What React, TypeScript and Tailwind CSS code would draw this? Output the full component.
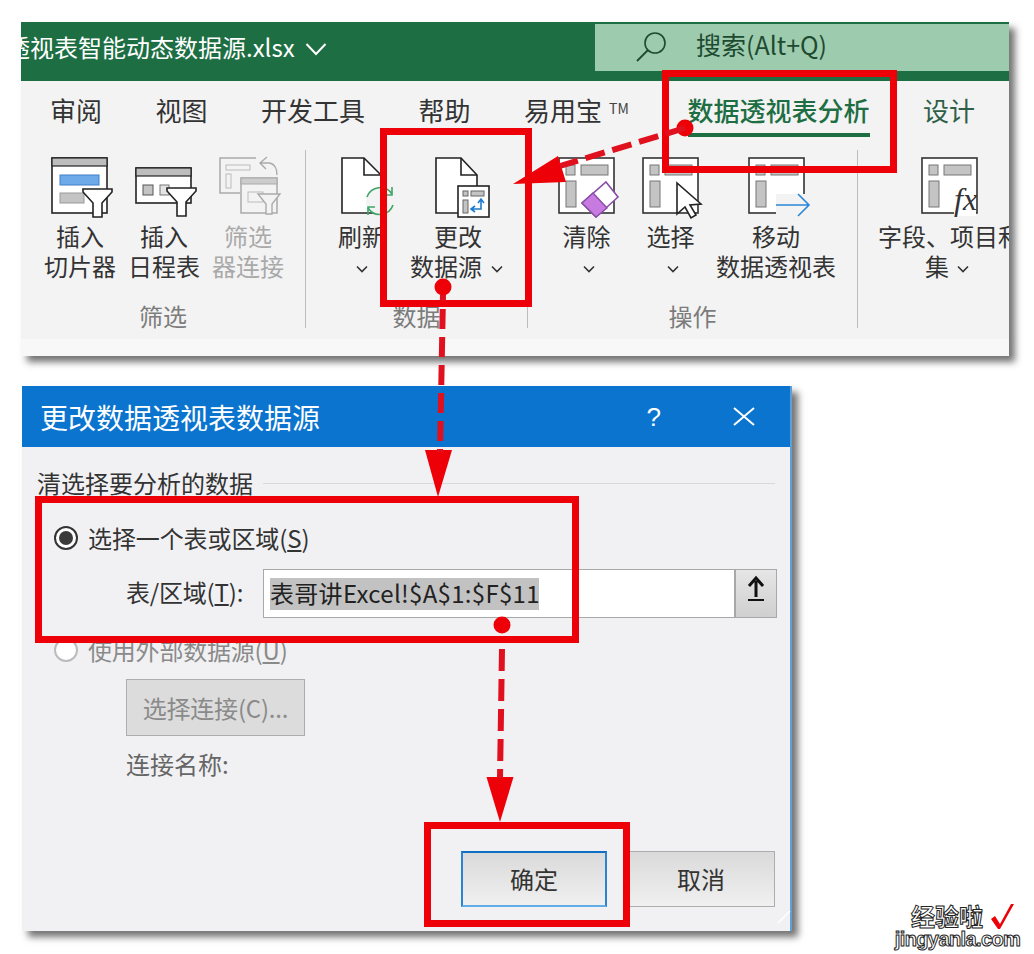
import React from 'react';

const FONT = '"Noto Sans CJK SC","Noto Sans",sans-serif';

function Chevron({ className = '' }: { className?: string }) {
  return (
    <svg width="12" height="8" viewBox="0 0 12 8" className={`inline-block ${className}`}>
      <path d="M1 1.5 L6 6.5 L11 1.5" fill="none" stroke="#333" strokeWidth="1.6" />
    </svg>
  );
}

function Funnel({ x, y, stroke = '#222' }: { x: number; y: number; stroke?: string }) {
  return (
    <path
      d={`M${x} ${y} H${x + 29} V${y + 3} L${x + 19} ${y + 14} V${y + 28} H${x + 10} V${y + 14} L${x} ${y + 3} Z`}
      fill="#fff"
      stroke={stroke}
      strokeWidth="1.6"
    />
  );
}

function Canvas({ children }: { children: React.ReactNode }) {
  return (
    <svg width="80" height="66" viewBox="0 0 80 66" className="mx-auto block">
      {children}
    </svg>
  );
}

function Cells({ x }: { x: number }) {
  return (
    <>
      <rect x={x} y="4" width="55" height="55" fill="#fff" stroke="#333" strokeWidth="1.6" />
      <rect x={x + 7} y="11" width="9" height="10" fill="#c4c4c4" stroke="#777" />
      <rect x={x + 22} y="11" width="27" height="10" fill="#c4c4c4" stroke="#777" />
      <rect x={x + 7} y="27" width="10" height="26" fill="#c4c4c4" stroke="#777" />
    </>
  );
}

function Btn({
  w,
  icon,
  lines,
  dim,
}: {
  w: string;
  icon: React.ReactNode;
  lines: React.ReactNode[];
  dim?: boolean;
}) {
  return (
    <div className={`${w} shrink-0 flex flex-col items-center`}>
      <div className="h-[71px] pt-[4px]">{icon}</div>
      {lines.map((l, i) => (
        <div
          key={i}
          className={`h-[30px] leading-[30px] text-[24px] whitespace-nowrap ${dim ? 'text-[#a9a9a9]' : 'text-[#333333]'}`}
        >
          {l}
        </div>
      ))}
    </div>
  );
}

function Group({
  w,
  pl,
  label,
  sep = true,
  children,
}: {
  w: string;
  pl: string;
  label?: string;
  sep?: boolean;
  children: React.ReactNode;
}) {
  return (
    <div className={`${w} h-[178px] shrink-0 ${sep ? 'border-r border-[#bdbdbd]' : ''}`}>
      <div className={`h-[147px] flex ${pl}`}>{children}</div>
      {label && <div className="mt-[7px] h-[24px] leading-[24px] text-[24px] text-center text-[#7c7c7c]">{label}</div>}
    </div>
  );
}

function Radio({ on }: { on?: boolean }) {
  return (
    <span
      className={`w-[24px] h-[24px] rounded-full border-2 flex items-center justify-center shrink-0 ${
        on ? 'border-[#333] bg-white' : 'border-[#bbbbbb] bg-white'
      }`}
    >
      {on && <span className="w-[14px] h-[14px] rounded-full bg-[#3a3a3a]" />}
    </span>
  );
}

export default function App() {
  return (
    <div
      className="relative w-[1034px] h-[954px] overflow-hidden bg-white pt-[22px] pl-[21px]"
      style={{ fontFamily: FONT }}
    >
      {/* Excel ribbon */}
      <div className="w-[988px] h-[334px] flex flex-col overflow-hidden bg-[#f3f3f3] shadow-[6px_6px_7px_rgba(0,0,0,0.55)]">
        <div className="h-[59px] shrink-0 bg-[#1d6e43] flex items-center overflow-hidden">
          <span className="-ml-[15px] mb-[9px] text-[24px] text-white whitespace-nowrap">透视表智能动态数据源.xlsx</span>
          <svg width="22" height="14" viewBox="0 0 22 14" className="ml-[10px] mb-[6px] shrink-0">
            <path d="M1.5 2 L11 12 L20.5 2" fill="none" stroke="#fff" strokeWidth="2" />
          </svg>
          <div className="ml-auto self-start mt-[2px] w-[414px] h-[47px] bg-[#9dcbae] flex items-center pl-[39px] text-[#1e4a30] shrink-0">
            <svg width="38" height="38" viewBox="0 0 38 38" className="mb-[2px]">
              <circle cx="21" cy="15" r="10" fill="none" stroke="#1e4a30" strokeWidth="1.6" />
              <path d="M14 22 L3 33" stroke="#1e4a30" strokeWidth="1.8" />
            </svg>
            <span className="ml-[24px] mb-[6px] text-[25px] leading-none whitespace-nowrap">搜索(Alt+Q)</span>
          </div>
        </div>

        <div className="h-[69px] shrink-0 flex items-start gap-[53.5px] pl-[29px] pt-[13px] text-[26px] leading-[32px] text-[#333333] whitespace-nowrap">
          <span>审阅</span>
          <span>视图</span>
          <span>开发工具</span>
          <span>帮助</span>
          <span className="w-[106px] relative">
            易用宝
            <span className="absolute left-[85px] top-[-2px] text-[14px] text-[#444]">TM</span>
          </span>
          <span className="ml-[4px] font-medium text-[#1d6e43] border-b-[4px] border-[#1d6e43] h-[43px] w-[182px]">数据透视表分析</span>
          <span className="text-[#2f5f47]">设计</span>
        </div>

        <div className="h-[178px] shrink-0 flex">
          <Group w="w-[285px]" pl="pl-[17px]" label="筛选">
            <Btn
              w="w-[84px]"
              lines={['插入', '切片器']}
              icon={
                <Canvas>
                  <rect x="12" y="4" width="55" height="55" fill="#fff" stroke="#222" strokeWidth="1.6" />
                  <rect x="12" y="4" width="55" height="8" fill="#bdbdbd" stroke="#222" strokeWidth="1.2" />
                  <rect x="20" y="21" width="39" height="10" fill="#6eaaea" stroke="#3f80c8" />
                  <rect x="20" y="39" width="24" height="10" fill="#c4c4c4" stroke="#999" />
                  <Funnel x={43} y={35} />
                </Canvas>
              }
            />
            <Btn
              w="w-[84px]"
              lines={['插入', '日程表']}
              icon={
                <Canvas>
                  <rect x="12" y="14" width="55" height="35" fill="#fff" stroke="#222" strokeWidth="1.6" />
                  <rect x="12" y="14" width="55" height="8" fill="#bdbdbd" stroke="#222" strokeWidth="1.2" />
                  <rect x="19" y="31" width="10" height="10" fill="#c4c4c4" stroke="#555" />
                  <rect x="36" y="31" width="9" height="10" fill="#e4e4e4" stroke="#777" />
                  <Funnel x={43} y={34} />
                </Canvas>
              }
            />
            <Btn
              w="w-[84px]"
              dim
              lines={['筛选', '器连接']}
              icon={
                <Canvas>
                  <path d="M48 4 H12 V39 H32" fill="none" stroke="#aaa" strokeWidth="1.5" />
                  <rect x="18" y="11" width="24" height="5" fill="none" stroke="#bbb" />
                  <rect x="18" y="20" width="5" height="14" fill="none" stroke="#bbb" />
                  <rect x="33" y="24" width="36" height="35" fill="#f3f3f3" stroke="#aaa" strokeWidth="1.5" />
                  <rect x="33" y="24" width="36" height="6" fill="#ccc" stroke="#aaa" />
                  <rect x="40" y="38" width="15" height="10" fill="none" stroke="#bbb" />
                  <path d="M52 9 H62 Q69 11 69 21 M59 3 L52 9 L58 15" fill="none" stroke="#aaa" strokeWidth="1.4" />
                  <path d="M50 40 H72 L64 50 V60 H58 V50 Z" fill="#f3f3f3" stroke="#aaa" strokeWidth="1.4" />
                </Canvas>
              }
            />
          </Group>

          <Group w="w-[222px]" pl="pl-[14px]" label="数据">
            <Btn
              w="w-[84px]"
              lines={['刷新', <Chevron key="c" />]}
              icon={
                <Canvas>
                  <path d="M20 4 H42 L59 21 V59 H20 Z" fill="#fff" stroke="#222" strokeWidth="1.6" />
                  <path d="M42 4 V21 H59" fill="none" stroke="#222" strokeWidth="1.6" />
                  <circle cx="58" cy="47" r="14" fill="#f3f3f3" stroke="none" />
                  <path d="M45 43 A14 14 0 0 1 70 40 M71 51 A14 14 0 0 1 46 54" fill="none" stroke="#3fa567" strokeWidth="1.6" />
                  <path d="M70 33 V41 H63 M46 61 V53 H53" fill="none" stroke="#3fa567" strokeWidth="1.6" />
                </Canvas>
              }
            />
            <Btn
              w="w-[108px]"
              lines={['更改', <span key="c" className="pr-[3px]">数据源<Chevron className="ml-[9px] align-middle" /></span>]}
              icon={
                <Canvas>
                  <path d="M18 4 H43 L59 21 V59 H18 Z" fill="#fff" stroke="#222" strokeWidth="1.6" />
                  <path d="M43 4 V21 H59" fill="none" stroke="#222" strokeWidth="1.6" />
                  <rect x="40" y="32" width="31" height="31" fill="#fff" stroke="#222" strokeWidth="1.6" />
                  <rect x="45" y="37" width="5" height="5" fill="#c4c4c4" stroke="#666" />
                  <rect x="53" y="37" width="13" height="5" fill="#c4c4c4" stroke="#666" />
                  <rect x="45" y="46" width="5" height="13" fill="#c4c4c4" stroke="#666" />
                  <path d="M63 46 V55 H54 M60 49 L63 45 L66 49 M57 52 L53 55 L57 58" fill="none" stroke="#1e7bd0" strokeWidth="1.6" />
                </Canvas>
              }
            />
          </Group>

          <Group w="w-[330px]" pl="pl-[19px]" label="操作">
            <Btn
              w="w-[84px]"
              lines={[<span key="t" className="pr-[5px]">清除</span>, <Chevron key="c" />]}
              icon={
                <Canvas>
                  <Cells x={10} />
                  <path d="M57 28 L69 43 L47 63 L33 49 Z" fill="#fff" stroke="#8a4da6" strokeWidth="1.6" />
                  <path d="M44 39 L58 54 L47 63 L33 49 Z" fill="#c77be0" stroke="#8a4da6" strokeWidth="1.4" />
                </Canvas>
              }
            />
            <Btn
              w="w-[84px]"
              lines={[<span key="t" className="pr-[5px]">选择</span>, <Chevron key="c" />]}
              icon={
                <Canvas>
                  <Cells x={10} />
                  <path d="M44 29 V60 L52 53 L58 64 L63 61 L57 51 L68 50 Z" fill="#fff" stroke="#222" strokeWidth="1.6" />
                </Canvas>
              }
            />
            <Btn
              w="w-[122px]"
              lines={['移动', '数据透视表']}
              icon={
                <Canvas>
                  <Cells x={13} />
                  <rect x="40" y="40" width="36" height="22" fill="#f3f3f3" stroke="none" />
                  <path d="M40 51 H72 M62 40 L73 51 L62 62" fill="none" stroke="#2a86d8" strokeWidth="1.6" />
                </Canvas>
              }
            />
          </Group>

          <Group w="w-[151px]" pl="pl-[20px]" sep={false}>
            <Btn
              w="w-[144px]"
              lines={['字段、项目和', <span key="c" className="pr-[6px]">集<Chevron className="ml-[8px] align-middle" /></span>]}
              icon={
                <Canvas>
                  <Cells x={12} />
                  <rect x="44" y="50" width="22" height="12" fill="#fff" stroke="none" />
                  <text x="44" y="56" fontFamily='"Liberation Serif",serif' fontStyle="italic" fontSize="32" fill="#333">
                    fx
                  </text>
                </Canvas>
              }
            />
          </Group>
        </div>

        <div className="h-[11px] shrink-0" />
        <div className="flex-1 bg-[#f8f8f8]" />
      </div>

      {/* Dialog */}
      <div className="mt-[30px] ml-[1px] w-[770px] h-[545px] flex flex-col bg-[#f1f1f3] border-r-2 border-[#5e9fd6] shadow-[6px_6px_7px_rgba(0,0,0,0.55)]">
        <div className="h-[61px] shrink-0 bg-[#0b74cf] flex items-center pl-[18px] text-white">
          <span className="text-[28px] leading-none whitespace-nowrap">更改数据透视表数据源</span>
          <span className="ml-auto text-[26px] leading-none" style={{ fontFamily: '"Liberation Sans",sans-serif' }}>
            ?
          </span>
          <svg width="22" height="19" viewBox="0 0 22 19" className="ml-[72px] mr-[35px]">
            <path d="M1 1 L21 18 M21 1 L1 18" stroke="#fff" strokeWidth="2" />
          </svg>
        </div>

        <div className="mt-[21px] pl-[15px] pr-[15px] flex items-center">
          <span className="text-[24px] leading-[30px] text-[#333]">清选择要分析的数据</span>
          <span className="ml-[10px] flex-1 h-px bg-[#d8d8d8]" />
        </div>

        <div className="mt-[25px] pl-[32px] flex items-center gap-[10px]">
          <Radio on />
          <span className="text-[24px] leading-[30px] text-[#333] tracking-[-0.1px]">
            选择一个表或区域(<span className="underline">S</span>)
          </span>
        </div>

        <div className="mt-[16px] pl-[104px] flex items-center">
          <span className="w-[137px] pb-[3px] text-[24px] leading-[30px] text-[#333] whitespace-nowrap tracking-[-0.2px]">
            表/区域(<span className="underline">T</span>):
          </span>
          <div className="w-[472px] h-[49px] bg-white border border-[#a8a8a8] flex items-center pl-[6px]">
            <span className="w-[269px] h-[32px] bg-[#c2c2c2] text-[24px] leading-[29px] text-[#222] whitespace-nowrap tracking-[0.3px]">
              表哥讲Excel!$A$1:$F$11
            </span>
          </div>
          <div className="w-[42px] h-[49px] bg-gradient-to-b from-[#e6e6e6] to-[#cfcfcf] border border-[#a8a8a8] flex items-start pt-[5px] justify-center">
            <svg width="20" height="26" viewBox="0 0 20 26">
              <path d="M10 22 V6 M3 11 L10 3 L17 11" fill="none" stroke="#111" strokeWidth="3" />
              <path d="M2 25 H18" stroke="#111" strokeWidth="2" />
            </svg>
          </div>
        </div>

        <div className="mt-[17px] pl-[32px] flex items-center gap-[10px]">
          <Radio />
          <span className="text-[24px] leading-[30px] text-[#8a8a8a] tracking-[-0.2px]">
            使用外部数据源(<span className="underline">U</span>)
          </span>
        </div>

        <div className="mt-[14px] ml-[104px] w-[179px] h-[57px] bg-[#dcdcdc] border border-[#adadad] flex items-center justify-center text-[24px] text-[#8a8a8a] whitespace-nowrap tracking-[-0.2px]">
          选择连接(C)...
        </div>

        <div className="mt-[13px] ml-[104px] text-[24px] leading-[30px] text-[#666]">连接名称:</div>

        <div className="mt-[72px] ml-[439px] flex gap-[20px]">
          <div className="w-[146px] h-[56px] bg-gradient-to-b from-[#dadada] to-[#f0f0f0] border-2 border-t-[#0e6fc5] border-l-[#2b84d2] border-r-[#2b84d2] border-b-[#62ade8] flex items-center justify-center text-[24px] text-[#333]">
            确定
          </div>
          <div className="w-[148px] h-[56px] bg-gradient-to-b from-[#dadada] to-[#f0f0f0] border border-[#adadad] flex items-center justify-center text-[24px] text-[#333]">
            取消
          </div>
        </div>
      </div>

      {/* Red annotation frames */}
      <div className="absolute left-[662px] top-[70px] w-[235px] h-[103px] border-[7px] border-[#ee0008]" />
      <div className="absolute left-[380px] top-[128px] w-[152px] h-[179px] border-[7px] border-[#ee0008]" />
      <div className="absolute left-[35px] top-[496px] w-[544px] h-[147px] border-[7px] border-[#ee0008]" />
      <div className="absolute left-[424px] top-[822px] w-[206px] h-[105px] border-[7px] border-[#ee0008]" />

      {/* Red arrows */}
      <svg width="1034" height="954" viewBox="0 0 1034 954" className="absolute left-0 top-0 pointer-events-none">
        <path d="M778 923 L790 911" stroke="#ffffff" strokeWidth="1.5" />
        <g fill="#ee0008" stroke="none">
          <circle cx="685" cy="128" r="8.5" />
          <circle cx="443" cy="287" r="8.5" />
          <circle cx="502" cy="625" r="8.5" />
          <path d="M513 184 L558 156 L566 182 Z" />
          <path d="M425 450 H452 L438 497 Z" />
          <path d="M486.5 777 H513.5 L500 822 Z" />
        </g>
        <g fill="none" stroke="#e0101e" strokeWidth="6">
          <path d="M685 128 L560 166" strokeDasharray="20 8" />
          <path d="M443 295 L440 452" strokeDasharray="20 8" strokeDashoffset="-14" />
          <path d="M502 649 L500 778" strokeDasharray="22 8" />
        </g>
      </svg>

      {/* Watermark */}
      <div className="absolute left-[895px] top-[902px] w-[125px] flex flex-col items-center text-white [-webkit-text-stroke:1px_#222] font-bold">
        <div className="flex items-center h-[27px] leading-[27px] text-[24px] whitespace-nowrap ml-[11px]">
          经验啦
          <svg width="26" height="28" viewBox="0 0 26 28" className="ml-[6px]">
            <path d="M2 17 L6 14 L11 22 L22 2 L25 2 L11 27 H9 Z" fill="#ee0008" stroke="none" />
          </svg>
        </div>
        <div className="h-[20px] leading-[20px] text-[20px] whitespace-nowrap tracking-[-0.6px]" style={{ fontFamily: '"Liberation Sans",sans-serif' }}>
          jingyanla.com
        </div>
      </div>
    </div>
  );
}
